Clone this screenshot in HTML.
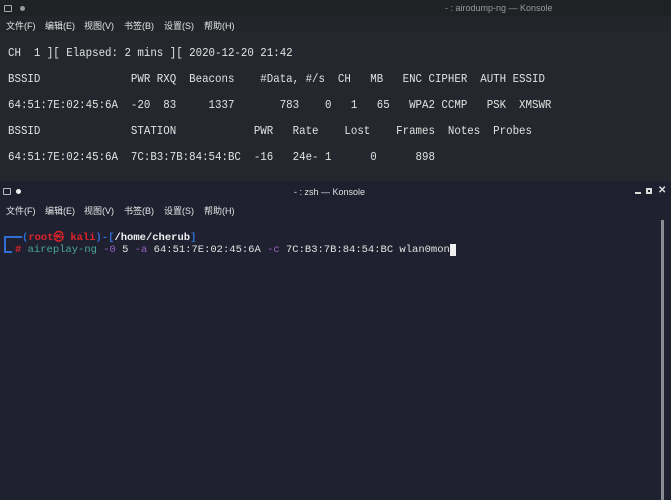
<!DOCTYPE html>
<html><head><meta charset="utf-8"><style>
*{margin:0;padding:0;box-sizing:border-box}
body{width:671px;height:500px;overflow:hidden;background:#202230;position:relative;font-family:"Liberation Sans","Noto Sans CJK SC",sans-serif}
.abs{position:absolute}
.tb{left:0;width:671px;height:16px;background:#1f2125}
.menu{left:0;width:671px;height:17px;font-size:9px;color:#e6e6e6;background:#22252a}
.menu span{position:absolute;top:3px}
.mono{font-family:"Liberation Mono","DejaVu Sans Mono",monospace;white-space:pre;color:#e2e2e2}
.t1 div{position:absolute;left:8px;font-size:12.4px;transform:scaleX(0.87);transform-origin:0 0}
</style></head><body>
<div class="abs" style="left:0;top:0;width:671px;height:181px;background:#24272d"></div>
<div class="abs tb" style="top:0"></div>
<div class="abs" style="left:4px;top:5px;width:8px;height:7px;border:1px solid #aaa;border-radius:1px"></div>
<div class="abs" style="left:20px;top:6px;width:5px;height:5px;border-radius:50%;background:#999"></div>
<div class="abs" style="left:445px;top:3px;font-size:9px;color:#9a9a9a">- : airodump-ng — Konsole</div>
<div class="abs menu" style="top:16px"><span style="left:6px">文件(F)</span><span style="left:45px">编辑(E)</span><span style="left:84px">视图(V)</span><span style="left:124px">书签(B)</span><span style="left:164px">设置(S)</span><span style="left:204px">帮助(H)</span></div>
<div class="t1 mono">
<div style="top:46px">CH  1 ][ Elapsed: 2 mins ][ 2020-12-20 21:42</div>
<div style="top:72px">BSSID              PWR RXQ  Beacons    #Data, #/s  CH   MB   ENC CIPHER  AUTH ESSID</div>
<div style="top:98px">64:51:7E:02:45:6A  -20  83     1337       783    0   1   65   WPA2 CCMP   PSK  XMSWR</div>
<div style="top:124px">BSSID              STATION            PWR   Rate    Lost    Frames  Notes  Probes</div>
<div style="top:150px">64:51:7E:02:45:6A  7C:B3:7B:84:54:BC  -16   24e- 1      0      898</div>
</div>
<div class="abs" style="left:0;top:181px;width:671px;height:319px;background:#1f2130"></div>
<div class="abs" style="left:0;top:184px;width:671px;height:16px;background:#1e2030"></div>
<div class="abs" style="left:3px;top:188px;width:8px;height:7px;border:1px solid #bbb;border-radius:1px"></div>
<div class="abs" style="left:16px;top:189px;width:5px;height:5px;border-radius:50%;background:#eee"></div>
<div class="abs" style="left:294px;top:187px;font-size:9px;color:#e0e0e0">- : zsh — Konsole</div>
<div class="abs" style="left:635px;top:192px;width:6px;height:2px;background:#ddd"></div>
<div class="abs" style="left:646px;top:188px;width:6px;height:6px;background:#ddd"><div style="margin:2px;width:2px;height:2px;background:#1e2030"></div></div>
<div class="abs" style="left:658px;top:185px;font-size:10px;color:#ddd;font-weight:bold">✕</div>
<div class="abs menu" style="top:201px;background:#1f2130"><span style="left:6px">文件(F)</span><span style="left:45px">编辑(E)</span><span style="left:84px">视图(V)</span><span style="left:124px">书签(B)</span><span style="left:164px">设置(S)</span><span style="left:204px">帮助(H)</span></div>
<div class="abs" style="left:661px;top:220px;width:3px;height:280px;background:#8a8c94"></div>
<div class="abs" style="left:4px;top:237px;width:2px;height:15px;background:#2f6fd6"></div>
<div class="abs" style="left:4px;top:236px;width:18px;height:2px;background:#2f6fd6"></div>
<div class="abs" style="left:4px;top:251px;width:8px;height:2px;background:#2f6fd6"></div>
<div class="abs mono" style="left:22px;top:229px;font-size:10.5px;font-weight:bold"><span style="color:#2f6fd6">(</span><span style="color:#e0232a">root㉿ kali</span><span style="color:#2f6fd6">)-[</span><span style="color:#f0f0f0">/home/cherub</span><span style="color:#2f6fd6">]</span></div>
<div class="abs mono" style="left:15px;top:244px;font-size:10.5px"><span style="color:#e0232a;font-weight:bold"># </span><span style="color:#4aa59a">aireplay-ng</span> <span style="color:#9b5fc0">-0</span> 5 <span style="color:#9b5fc0">-a</span> 64:51:7E:02:45:6A <span style="color:#9b5fc0">-c</span> 7C:B3:7B:84:54:BC wlan0mon<span style="background:#f0f0f0"> </span></div>
</body></html>
